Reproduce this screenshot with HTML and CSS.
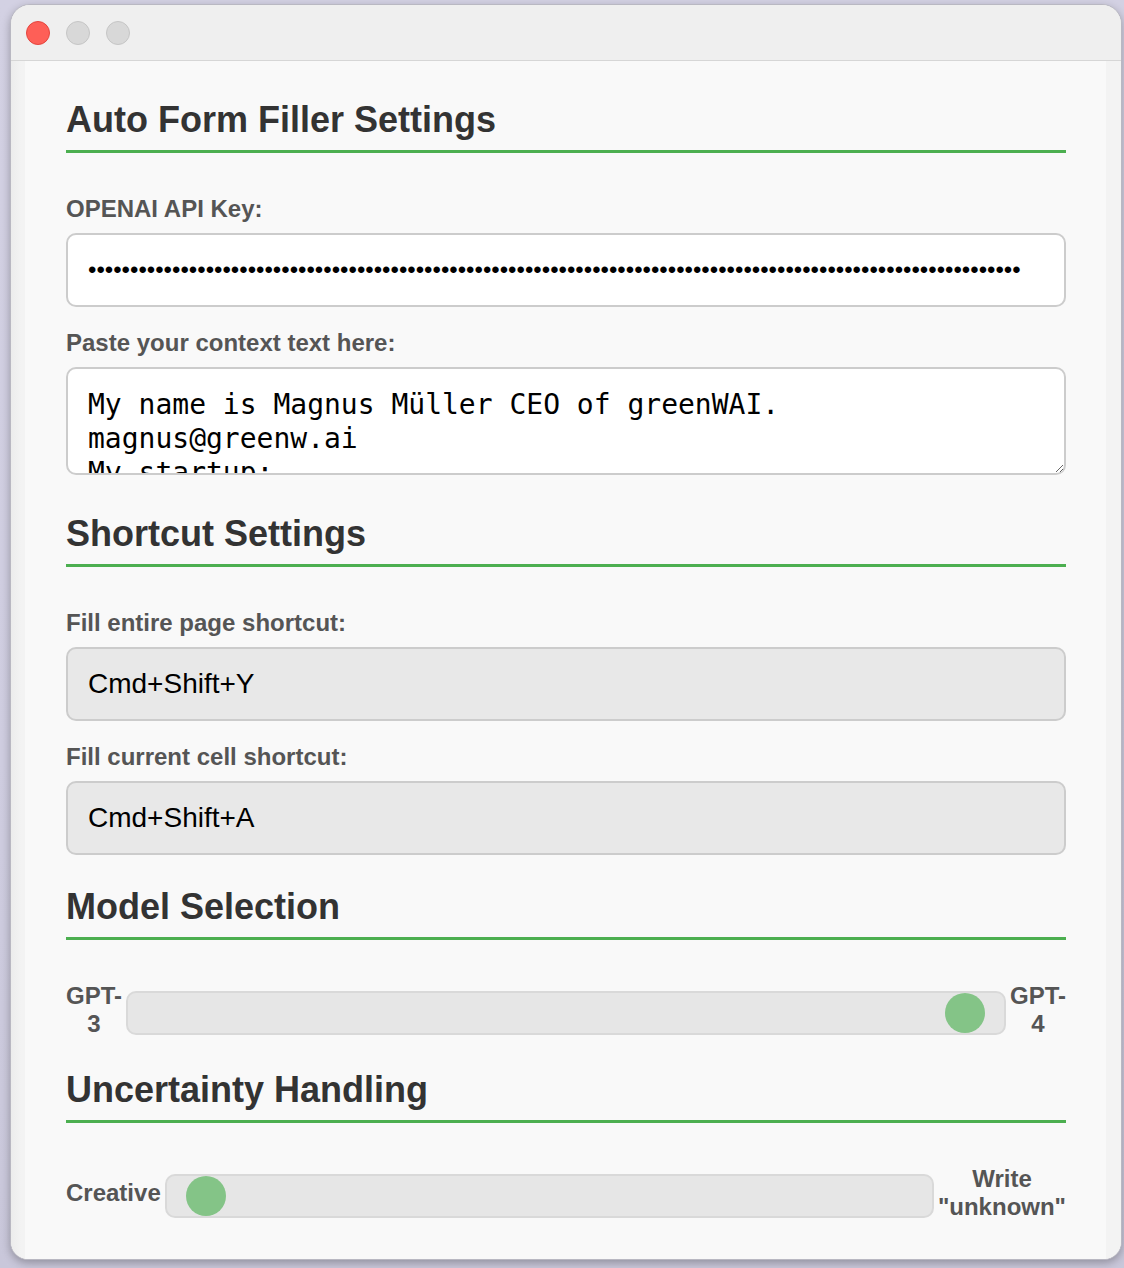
FILE: index.html
```html
<!DOCTYPE html>
<html lang="en">
<head>
<meta charset="utf-8">
<title>Auto Form Filler Settings</title>
<link rel="stylesheet" href="styles.css">
</head>
<body>
<div class="desktop">
  <div class="window">
    <div class="titlebar">
      <span class="light light-close"></span>
      <span class="light"></span>
      <span class="light"></span>
    </div>
    <div class="frame">
      <main class="popup">
        <section class="section">
          <h2 class="section-title">Auto Form Filler Settings</h2>
          <label class="label" for="apiKey">OPENAI API Key:</label>
          <input id="apiKey" class="field field-password" type="password" value="sk-xxxxxxxxxxxxxxxxxxxxxxxxxxxxxxxxxxxxxxxxxxxxxxxxxxxxxxxxxxxxxxxxxxxxxxxxxxxxxxxxxxxxxxxxxxxxxxxxxxxxxxxxxxxx">
          <label class="label" for="context">Paste your context text here:</label>
          <textarea id="context" class="context">My name is Magnus Müller CEO of greenWAI.
magnus@greenw.ai
My startup:
greenWAI</textarea>
        </section>

        <section class="section">
          <h2 class="section-title">Shortcut Settings</h2>
          <label class="label" for="fillPage">Fill entire page shortcut:</label>
          <input id="fillPage" class="field field-readonly" type="text" value="Cmd+Shift+Y" readonly>
          <label class="label" for="fillCell">Fill current cell shortcut:</label>
          <input id="fillCell" class="field field-readonly" type="text" value="Cmd+Shift+A" readonly>
        </section>

        <section class="section">
          <h2 class="section-title">Model Selection</h2>
          <div class="slider-row">
            <span class="slider-label">GPT-<wbr>3</span>
            <div class="track track-max"><span class="thumb"></span></div>
            <span class="slider-label">GPT-<wbr>4</span>
          </div>
        </section>

        <section class="section">
          <h2 class="section-title">Uncertainty Handling</h2>
          <div class="slider-row">
            <span class="slider-label">Creative</span>
            <div class="track"><span class="thumb"></span></div>
            <span class="slider-label">Write "unknown"</span>
          </div>
        </section>
      </main>
    </div>
  </div>
</div>
</body>
</html>
```

FILE: styles.css
```css
* {
  box-sizing: border-box;
}

html, body {
  margin: 0;
  padding: 0;
}

body {
  background: linear-gradient(180deg, #d3d1e3 0%, #cfcde0 60%, #c9c7da 100%);
  font-family: "Liberation Sans", Arial, sans-serif;
  width: 1124px;
  height: 1268px;
  overflow: hidden;
}

.desktop {
  width: 1124px;
  height: 1268px;
  padding: 4px 0 0 10px;
}

.window {
  width: 1112px;
  height: 1256px;
  border: 1px solid #b9b8c2;
  border-radius: 20px 20px 18px 18px;
  background: #f1f1f1;
  overflow: hidden;
  display: flex;
  flex-direction: column;
  box-shadow: 0 3px 8px rgba(0, 0, 0, 0.28);
}

.titlebar {
  flex: none;
  height: 56px;
  border-bottom: 1px solid #d6d6d6;
  background: #efefef;
  display: flex;
  align-items: center;
  gap: 16px;
  padding: 0 0 0 15px;
}

.light {
  width: 24px;
  height: 24px;
  border-radius: 50%;
  background: #d8d8d8;
  border: 1px solid #c5c5c5;
}

.light-close {
  background: #fe5f57;
  border-color: #e3453e;
}

.frame {
  flex: 1;
  display: flex;
  padding: 0 15px 0 14px;
  background: linear-gradient(90deg, #ececec 0px, #f3f3f3 10px, #f3f3f3 100%);
}

.popup {
  flex: 1;
  background: #f9f9f9;
  padding: 38px 40px 0 41px;
}

.section {
  display: flow-root;
}

.section + .section {
  margin-top: 31px;
}

.section-title {
  margin: 0 0 42px;
  font-size: 36px;
  line-height: 42px;
  font-weight: 700;
  color: #333333;
  padding-bottom: 9px;
  border-bottom: 3px solid #4caf50;
}

.label {
  display: block;
  font-size: 24px;
  line-height: 28px;
  font-weight: 700;
  color: #555555;
  margin-bottom: 10px;
}

.field {
  display: block;
  width: 100%;
  height: 74px;
  margin: 0 0 22px;
  padding: 0 20px;
  border: 2px solid #cccccc;
  border-radius: 10px;
  background: #ffffff;
  color: #000000;
  font-family: "Liberation Sans", Arial, sans-serif;
  font-size: 28px;
  outline: none;
}

.field:last-child {
  margin-bottom: 0;
}

.field-password {
  font-size: 24px;
}

.field-readonly {
  background: #e8e8e8;
}

.context {
  display: block;
  width: 100%;
  height: 108px;
  margin: 0 0 7px;
  padding: 19px 20px 0;
  border: 2px solid #cccccc;
  border-radius: 10px;
  background: #ffffff;
  color: #000000;
  font-family: "DejaVu Sans Mono", "Liberation Mono", monospace;
  font-size: 28px;
  line-height: 34px;
  overflow: hidden;
  resize: vertical;
  outline: none;
}

.slider-row {
  margin-top: 3px;
  display: flex;
  align-items: center;
  gap: 4px;
}

.slider-label {
  flex: none;
  width: min-content;
  text-align: center;
  font-size: 24px;
  line-height: 28px;
  font-weight: 700;
  color: #555555;
}

.track {
  flex: 1;
  height: 44px;
  margin-top: 6px;
  padding: 0 19px;
  border: 2px solid #d9d9d9;
  border-radius: 10px;
  background: #e6e6e6;
  display: flex;
  align-items: center;
  justify-content: flex-start;
}

.track-max {
  justify-content: flex-end;
}

.thumb {
  width: 40px;
  height: 40px;
  border-radius: 50%;
  background: #84c487;
}
```
